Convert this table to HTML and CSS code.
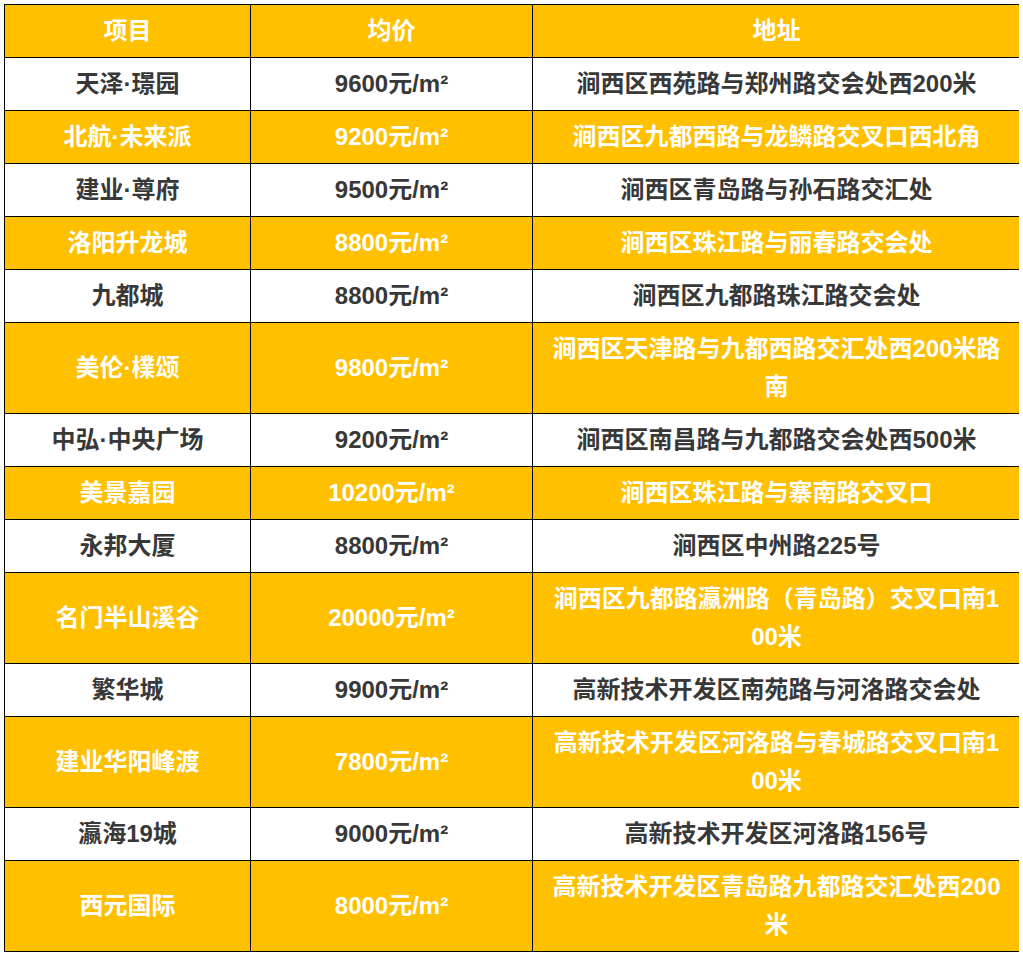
FILE: index.html
```html
<!DOCTYPE html>
<html lang="zh-CN">
<head>
<meta charset="utf-8">
<title>项目均价</title>
<link rel="stylesheet" href="styles.css">
</head>
<body>
<table class="price-table">
  <colgroup>
    <col class="col-name">
    <col class="col-price">
    <col class="col-addr">
  </colgroup>
  <thead>
    <tr class="row-hl">
      <th>项目</th><th>均价</th><th>地址</th>
    </tr>
  </thead>
  <tbody>
    <tr><td>天泽·璟园</td><td>9600元/m²</td><td>涧西区西苑路与郑州路交会处西200米</td></tr>
    <tr class="row-hl"><td>北航·未来派</td><td>9200元/m²</td><td>涧西区九都西路与龙鳞路交叉口西北角</td></tr>
    <tr><td>建业·尊府</td><td>9500元/m²</td><td>涧西区青岛路与孙石路交汇处</td></tr>
    <tr class="row-hl"><td>洛阳升龙城</td><td>8800元/m²</td><td>涧西区珠江路与丽春路交会处</td></tr>
    <tr><td>九都城</td><td>8800元/m²</td><td>涧西区九都路珠江路交会处</td></tr>
    <tr class="row-hl"><td>美伦·檏颂</td><td>9800元/m²</td><td>涧西区天津路与九都西路交汇处西200米路南</td></tr>
    <tr><td>中弘·中央广场</td><td>9200元/m²</td><td>涧西区南昌路与九都路交会处西500米</td></tr>
    <tr class="row-hl"><td>美景嘉园</td><td>10200元/m²</td><td>涧西区珠江路与寨南路交叉口</td></tr>
    <tr><td>永邦大厦</td><td>8800元/m²</td><td>涧西区中州路225号</td></tr>
    <tr class="row-hl"><td>名门半山溪谷</td><td>20000元/m²</td><td>涧西区九都路瀛洲路（青岛路）交叉口南100米</td></tr>
    <tr><td>繁华城</td><td>9900元/m²</td><td>高新技术开发区南苑路与河洛路交会处</td></tr>
    <tr class="row-hl"><td>建业华阳峰渡</td><td>7800元/m²</td><td>高新技术开发区河洛路与春城路交叉口南100米</td></tr>
    <tr><td>瀛海19城</td><td>9000元/m²</td><td>高新技术开发区河洛路156号</td></tr>
    <tr class="row-hl"><td>西元国际</td><td>8000元/m²</td><td>高新技术开发区青岛路九都路交汇处西200米</td></tr>
  </tbody>
</table>
</body>
</html>
```

FILE: styles.css
```css
html, body {
  background: #ffffff;
}
body {
  margin: 4px;
  font-family: "Liberation Sans", "Noto Sans CJK SC", sans-serif;
}
.price-table {
  border-collapse: collapse;
  table-layout: fixed;
  width: 1016px;
  font-size: 24px;
  font-weight: bold;
  line-height: 38px;
  color: #383838;
}
.col-name { width: 246px; }
.col-price { width: 282px; }
.col-addr { width: 488px; }
.price-table th,
.price-table td {
  border: 1px solid #000000;
  padding: 7px 15px;
  text-align: center;
  vertical-align: middle;
  word-break: break-all;
  font-weight: bold;
}
.row-hl {
  background: #ffc000;
  color: #ffffff;
}
```
